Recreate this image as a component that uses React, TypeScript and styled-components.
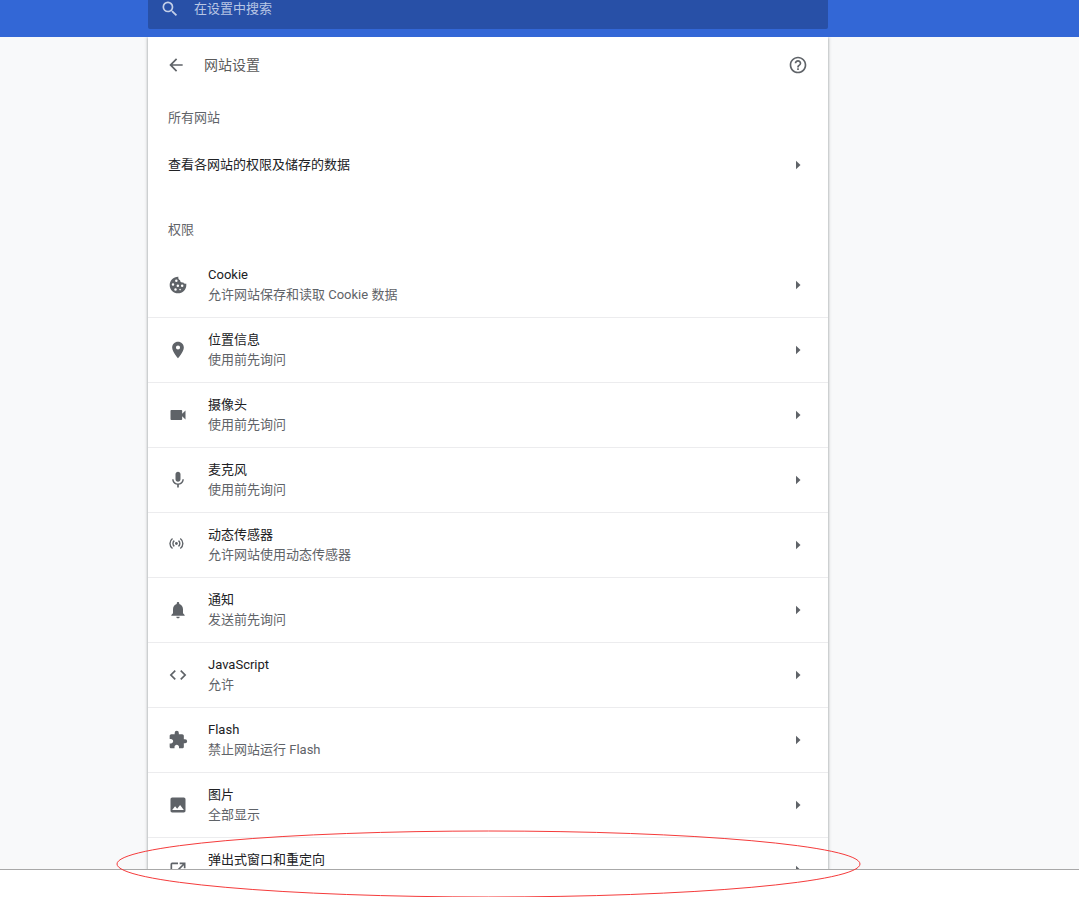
import React from "react";
import styled, { createGlobalStyle } from "styled-components";

const GlobalStyle = createGlobalStyle`
  * { box-sizing: border-box; }
  body {
    margin: 0;
    background: #fff;
    font-family: Roboto, "Noto Sans CJK SC", sans-serif;
    font-size: 13px;
    line-height: 20px;
    color: #202124;
  }
`;

const Shell = styled.div`
  position: relative;
  display: flex;
  flex-direction: column;
  height: 100vh;
  overflow: hidden;
`;

const Viewport = styled.div`
  flex: 1;
  min-height: 0;
  overflow: hidden;
  background: #f8f9fa;
`;

const Columns = styled.div`
  display: grid;
  grid-template-columns: minmax(0, 148fr) minmax(0, 680px) minmax(0, 251fr);
  & > * { grid-column: 2; }
`;

const Toolbar = styled(Columns).attrs({ as: "header" })`
  height: 37px;
  padding-bottom: 8px;
  align-items: end;
  align-content: end;
  overflow: hidden;
  background: #3367d6;
`;

const SearchBox = styled.label`
  display: flex;
  align-items: center;
  gap: 14px;
  height: 40px;
  padding: 0 12px;
  border-radius: 2px;
  background: #2850a7;
  color: #c3cfe8;
`;

const SearchInput = styled.input`
  flex: 1;
  min-width: 0;
  padding: 0;
  border: 0;
  outline: 0;
  background: transparent;
  color: inherit;
  font: inherit;
  &::placeholder { color: #b8c6e4; opacity: 1; }
`;

const Card = styled.main`
  min-height: 100vh;
  background: #fff;
  box-shadow: 0 1px 3px 1px rgba(60, 64, 67, 0.2), 0 1px 2px rgba(60, 64, 67, 0.35);
`;

const TitleBar = styled.div`
  display: flex;
  align-items: center;
  height: 56px;
  padding: 0 20px 0 18px;
`;

const IconButton = styled.button`
  display: flex;
  padding: 0;
  border: 0;
  background: none;
  color: #5f6368;
`;

const Title = styled.h1`
  flex: 1;
  margin: 0 0 0 18px;
  font-size: 14px;
  font-weight: 400;
  color: #5a5a5a;
`;

const SectionTitle = styled.h2<{ $spaced?: boolean }>`
  margin: ${(p) => (p.$spaced ? "16px" : "0")} 0 0;
  padding: 15px 20px 13px;
  font-size: 13px;
  font-weight: 400;
  color: #5f6368;
`;

const List = styled.ul`
  margin: 0;
  padding: 0;
  list-style: none;
  li + li { border-top: 1px solid #ececee; }
`;

const Row = styled.button<{ $compact?: boolean }>`
  display: flex;
  align-items: center;
  gap: 20px;
  width: 100%;
  height: ${(p) => (p.$compact ? "48px" : "64px")};
  padding: 0 20px;
  border: 0;
  background: none;
  color: #5f6368;
  font: inherit;
  text-align: left;
`;

const RowText = styled.span`
  flex: 1;
  display: flex;
  flex-direction: column;
`;

const RowTitle = styled.span`
  color: #202124;
`;

const BottomStrip = styled.footer`
  height: 28px;
  border-top: 1px solid #a8a8a8;
  background: #fff;
`;

const Annotation = styled(Columns)`
  position: absolute;
  left: 0;
  right: 0;
  bottom: 0;
  pointer-events: none;
`;

const Ring = styled.svg`
  justify-self: center;
  width: calc(100% + 63px);
  height: 66px;
  overflow: visible;
`;

const Icon = ({ d, size = 20 }: { d: string; size?: number }) => (
  <svg width={size} height={size} viewBox="0 0 24 24" fill="currentColor" fillRule="evenodd" aria-hidden="true">
    <path d={d} />
  </svg>
);

const paths = {
  search: "M15.5 14h-.79l-.28-.27A6.471 6.471 0 0 0 16 9.5 6.5 6.5 0 1 0 9.5 16c1.61 0 3.09-.59 4.23-1.57l.27.28v.79l5 4.99L20.49 19l-4.99-5zm-6 0C7.01 14 5 11.99 5 9.5S7.01 5 9.5 5 14 7.01 14 9.5 11.99 14 9.5 14z",
  back: "M20 11H7.83l5.59-5.59L12 4l-8 8 8 8 1.41-1.41L7.83 13H20v-2z",
  help: "M11 18h2v-2h-2v2zm1-16C6.48 2 2 6.48 2 12s4.48 10 10 10 10-4.48 10-10S17.52 2 12 2zm0 18c-4.41 0-8-3.59-8-8s3.59-8 8-8 8 3.59 8 8-3.59 8-8 8zm0-14c-2.21 0-4 1.79-4 4h2c0-1.1.9-2 2-2s2 .9 2 2c0 2-3 1.75-3 5h2c0-2.25 3-2.5 3-5 0-2.21-1.79-4-4-4z",
  cookie: "M12.5 2C6.500 1.800 2 6.480 2 12s4.480 10 10 10 10-4.480 10-10c0-.700-.050-1.300-.200-1.900-1.300 1-3.300.300-3.600-1.300-2 .800-4-.600-3.700-2.700-1.700-.400-2.600-2.400-2-4.100zM10 5.500a1.500 1.500 0 1 1 0 3 1.500 1.500 0 0 1 0-3zM6 9.800a1.500 1.500 0 1 1 0 3 1.500 1.500 0 0 1 0-3zM11.800 11.300a1.500 1.500 0 1 1 0 3 1.500 1.500 0 0 1 0-3zM9 16a1.500 1.500 0 1 1 0 3 1.500 1.500 0 0 1 0-3zM17 11.500a1.500 1.500 0 1 1 0 3 1.500 1.500 0 0 1 0-3zM14.500 16.500a1 1 0 1 1 0 2 1 1 0 0 1 0-2z",
  place: "M12 2C8.130 2 5 5.130 5 9c0 5.250 7 13 7 13s7-7.750 7-13c0-3.870-3.130-7-7-7zm0 9.500a2.500 2.500 0 0 1 0-5 2.500 2.500 0 0 1 0 5z",
  camera: "M17 10.500V7c0-.550-.450-1-1-1H4c-.550 0-1 .450-1 1v10c0 .550.450 1 1 1h12c.550 0 1-.450 1-1v-3.500l4 4v-11l-4 4z",
  mic: "M12 14c1.660 0 2.990-1.340 2.990-3L15 5c0-1.660-1.340-3-3-3S9 3.340 9 5v6c0 1.660 1.340 3 3 3zm5.300-3c0 3-2.540 5.100-5.300 5.100S6.700 14 6.700 11H5c0 3.410 2.720 6.230 6 6.720V21h2v-3.280c3.280-.480 6-3.300 6-6.720h-1.700z",
  bell: "M12 22c1.100 0 2-.900 2-2h-4c0 1.100.900 2 2 2zm6-6v-5c0-3.070-1.640-5.640-4.500-6.320V4c0-.830-.670-1.500-1.500-1.500s-1.500.670-1.500 1.500v.680C7.630 5.360 6 7.920 6 11v5l-2 2v1h16v-1l-2-2z",
  code: "M9.400 16.600L4.800 12l4.600-4.600L8 6l-6 6 6 6 1.400-1.400zm5.200 0l4.600-4.600-4.600-4.600L16 6l6 6-6 6-1.400-1.400z",
  puzzle: "M20.500 11H19V7c0-1.100-.900-2-2-2h-4V3.500a2.500 2.500 0 0 0-5 0V5H4c-1.100 0-1.990.900-1.990 2v3.800H3.500c1.490 0 2.700 1.210 2.700 2.700s-1.210 2.700-2.700 2.700H2V20c0 1.100.900 2 2 2h3.800v-1.500c0-1.490 1.210-2.700 2.700-2.700 1.490 0 2.700 1.210 2.700 2.700V22H17c1.100 0 2-.900 2-2v-4h1.500a2.500 2.500 0 0 0 0-5z",
  image: "M21 19V5c0-1.100-.900-2-2-2H5c-1.100 0-2 .900-2 2v14c0 1.100.900 2 2 2h14c1.100 0 2-.900 2-2zM8.500 13.500l2.500 3.010L14.500 12l4.500 6H5l3.500-4.500z",
  popup: "M19 19H5V5h7V3H5a2 2 0 0 0-2 2v14a2 2 0 0 0 2 2h14c1.100 0 2-.900 2-2v-7h-2v7zM14 3v2h3.590l-9.830 9.830 1.410 1.410L19 6.410V10h2V3h-7z",
};

const SensorIcon = () => (
  <svg width="20" height="20" viewBox="0 0 20 20" fill="none" stroke="currentColor" strokeWidth="1.400" aria-hidden="true">
    <circle cx="8.400" cy="8.500" r="1.400" fill="currentColor" stroke="none" />
    <path d="M6.300 5.600a3.800 3.800 0 0 0 0 5.800M10.500 5.600a3.800 3.800 0 0 1 0 5.800M4.500 3.500a6.200 6.200 0 0 0 0 10M12.300 3.500a6.200 6.200 0 0 1 0 10" />
  </svg>
);

const Arrow = () => (
  <svg width="20" height="20" viewBox="0 0 20 20" fill="currentColor" aria-hidden="true">
    <path d="M8 5.800l4.500 4.200L8 14.200z" />
  </svg>
);

const permissions: { icon: React.ReactNode; title: string; detail: string }[] = [
  { icon: <Icon d={paths.cookie} />, title: "Cookie", detail: "允许网站保存和读取 Cookie 数据" },
  { icon: <Icon d={paths.place} />, title: "位置信息", detail: "使用前先询问" },
  { icon: <Icon d={paths.camera} />, title: "摄像头", detail: "使用前先询问" },
  { icon: <Icon d={paths.mic} />, title: "麦克风", detail: "使用前先询问" },
  { icon: <SensorIcon />, title: "动态传感器", detail: "允许网站使用动态传感器" },
  { icon: <Icon d={paths.bell} />, title: "通知", detail: "发送前先询问" },
  { icon: <Icon d={paths.code} />, title: "JavaScript", detail: "允许" },
  { icon: <Icon d={paths.puzzle} />, title: "Flash", detail: "禁止网站运行 Flash" },
  { icon: <Icon d={paths.image} />, title: "图片", detail: "全部显示" },
  { icon: <Icon d={paths.popup} />, title: "弹出式窗口和重定向", detail: "" },
];

export default function App() {
  return (
    <Shell lang="zh-CN">
      <GlobalStyle />
      <Toolbar>
        <SearchBox>
          <Icon d={paths.search} />
          <SearchInput type="search" placeholder="在设置中搜索" aria-label="在设置中搜索" />
        </SearchBox>
      </Toolbar>
      <Viewport>
        <Columns>
          <Card>
            <TitleBar>
              <IconButton aria-label="返回">
                <Icon d={paths.back} />
              </IconButton>
              <Title>网站设置</Title>
              <IconButton aria-label="帮助">
                <Icon d={paths.help} />
              </IconButton>
            </TitleBar>
            <SectionTitle>所有网站</SectionTitle>
            <Row $compact>
              <RowText>
                <RowTitle>查看各网站的权限及储存的数据</RowTitle>
              </RowText>
              <Arrow />
            </Row>
            <SectionTitle $spaced>权限</SectionTitle>
            <List>
              {permissions.map((p) => (
                <li key={p.title}>
                  <Row>
                    {p.icon}
                    <RowText>
                      <RowTitle>{p.title}</RowTitle>
                      <span>{p.detail || "\u00a0"}</span>
                    </RowText>
                    <Arrow />
                  </Row>
                </li>
              ))}
            </List>
          </Card>
        </Columns>
      </Viewport>
      <BottomStrip />
      <Annotation aria-hidden="true">
        <Ring>
          <ellipse cx="50%" cy="50%" rx="50%" ry="50%" fill="none" stroke="#f53b3b" strokeWidth="1" />
        </Ring>
      </Annotation>
    </Shell>
  );
}
